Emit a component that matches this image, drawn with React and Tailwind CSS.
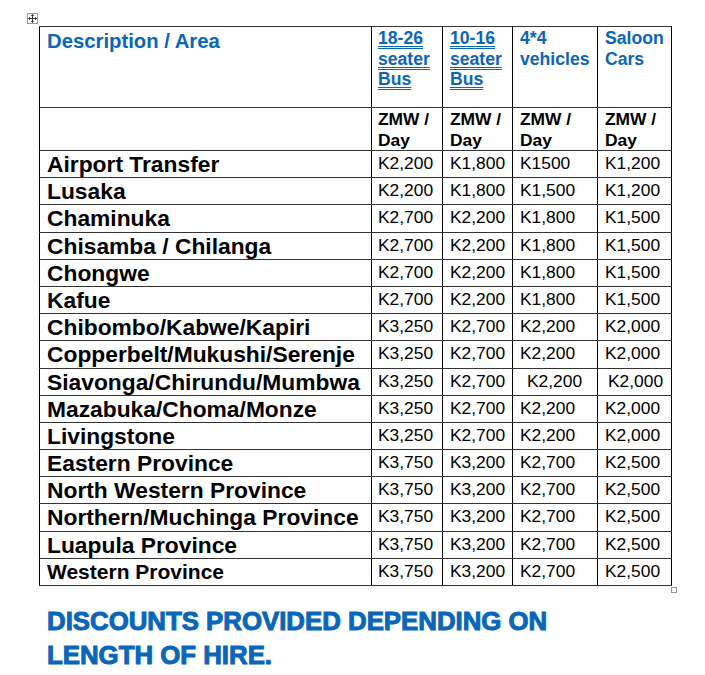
import React from "react";

const rows = [
  ["Airport Transfer", "K2,200", "K1,800", "K1500", "K1,200"],
  ["Lusaka", "K2,200", "K1,800", "K1,500", "K1,200"],
  ["Chaminuka", "K2,700", "K2,200", "K1,800", "K1,500"],
  ["Chisamba / Chilanga", "K2,700", "K2,200", "K1,800", "K1,500"],
  ["Chongwe", "K2,700", "K2,200", "K1,800", "K1,500"],
  ["Kafue", "K2,700", "K2,200", "K1,800", "K1,500"],
  ["Chibombo/Kabwe/Kapiri", "K3,250", "K2,700", "K2,200", "K2,000"],
  ["Copperbelt/Mukushi/Serenje", "K3,250", "K2,700", "K2,200", "K2,000"],
  ["Siavonga/Chirundu/Mumbwa", "K3,250", "K2,700", "K2,200", "K2,000", true],
  ["Mazabuka/Choma/Monze", "K3,250", "K2,700", "K2,200", "K2,000"],
  ["Livingstone", "K3,250", "K2,700", "K2,200", "K2,000"],
  ["Eastern Province", "K3,750", "K3,200", "K2,700", "K2,500"],
  ["North Western Province", "K3,750", "K3,200", "K2,700", "K2,500"],
  ["Northern/Muchinga Province", "K3,750", "K3,200", "K2,700", "K2,500"],
  ["Luapula Province", "K3,750", "K3,200", "K2,700", "K2,500"],
  ["Western Province", "K3,750", "K3,200", "K2,700", "K2,500", false, true],
];

const cell = "border-x border-x-black border-y-[1.5px] border-y-[#333] align-top p-0";

function numPad(r, i) {
  if (r[5] && i === 3) return "pl-[14px]";
  if (r[5] && i === 4) return "pl-[10px]";
  if (i === 1) return "pl-[6px]";
  return "pl-[7px]";
}

export default function App() {
  return (
    <div className="min-h-[675px] w-[705px] bg-white pt-[26px] pl-[39px] font-[family-name:'Liberation_Sans',Arial,sans-serif]">
      <div className="relative w-[632px]">
        <div className="absolute left-[-12px] top-[-13px] flex h-[11px] w-[11px] items-center justify-center border border-[#999] bg-white">
          <svg width="9" height="9" viewBox="0 0 9 9" fill="none" stroke="#333" strokeWidth="1">
            <path d="M4.5 0.5V8.5M0.5 4.5H8.5" />
            <path d="M3.2 1.8L4.5 0.5L5.8 1.8M3.2 7.2L4.5 8.5L5.8 7.2M1.8 3.2L0.5 4.5L1.8 5.8M7.2 3.2L8.5 4.5L7.2 5.8" />
          </svg>
        </div>
        <table className="w-[632px] table-fixed border-collapse border-[1.5px] border-black">
          <colgroup>
            <col className="w-[332px]" />
            <col className="w-[71px]" />
            <col className="w-[70px]" />
            <col className="w-[85px]" />
            <col className="w-[74px]" />
          </colgroup>
          <tbody>
            <tr className="h-[81px]">
              <td className={cell}>
                <div className="pl-[7px] pt-[2px] text-[20.3px] font-bold leading-[24px] text-[#0a66b8]">Description / Area</div>
              </td>
              <td className={cell}>
                <div className="pl-[6px] pt-[1px] text-[17.6px] font-bold leading-[20.5px] text-[#0a66b8] underline decoration-double decoration-[1px] underline-offset-[2px]">18-26 seater <span className="no-underline">Bus</span></div>
              </td>
              <td className={cell}>
                <div className="pl-[7px] pt-[1px] text-[17.6px] font-bold leading-[20.5px] text-[#0a66b8] underline decoration-double decoration-[1px] underline-offset-[2px]">10-16 seater <span className="no-underline">Bus</span></div>
              </td>
              <td className={cell}>
                <div className="pl-[7px] pt-[1px] text-[17.6px] font-bold leading-[20.5px] text-[#0a66b8]">4*4 vehicles</div>
              </td>
              <td className={cell}>
                <div className="pl-[7px] pt-[1px] text-[17.6px] font-bold leading-[20.5px] text-[#0a66b8]">Saloon Cars</div>
              </td>
            </tr>
            <tr className="h-[42px]">
              <td className={cell}></td>
              {[0, 1, 2, 3].map((i) => (
                <td key={i} className={cell}>
                  <div className={`${i === 0 ? "pl-[6px]" : "pl-[7px]"} pt-[1px] text-[17.4px] font-bold leading-[20.5px] text-black`}>ZMW / Day</div>
                </td>
              ))}
            </tr>
            {rows.map((r) => (
              <tr key={r[0]} className="h-[27.2px]">
                <td className={cell}>
                  <div className={`${r[6] ? "text-[21px]" : "text-[22.8px]"} whitespace-nowrap pl-[7px] font-bold leading-[26px] text-black`}>{r[0]}</div>
                </td>
                {[1, 2, 3, 4].map((i) => (
                  <td key={i} className={cell}>
                    <div className={`${numPad(r, i)} whitespace-nowrap pt-[1px] text-[17.4px] leading-[22px] text-black`}>{r[i]}</div>
                  </td>
                ))}
              </tr>
            ))}
          </tbody>
        </table>
        <div className="absolute right-[-6px] bottom-[-7px] h-[6px] w-[6px] border border-[#999] bg-white"></div>
      </div>
      <div className="mt-[18px] pl-[8px] text-[25.8px] font-bold leading-[34px] text-[#0a66b8] [-webkit-text-stroke:1px_#0a66b8]">
        <div>DISCOUNTS PROVIDED DEPENDING ON</div>
        <div>LENGTH OF HIRE.</div>
      </div>
    </div>
  );
}
